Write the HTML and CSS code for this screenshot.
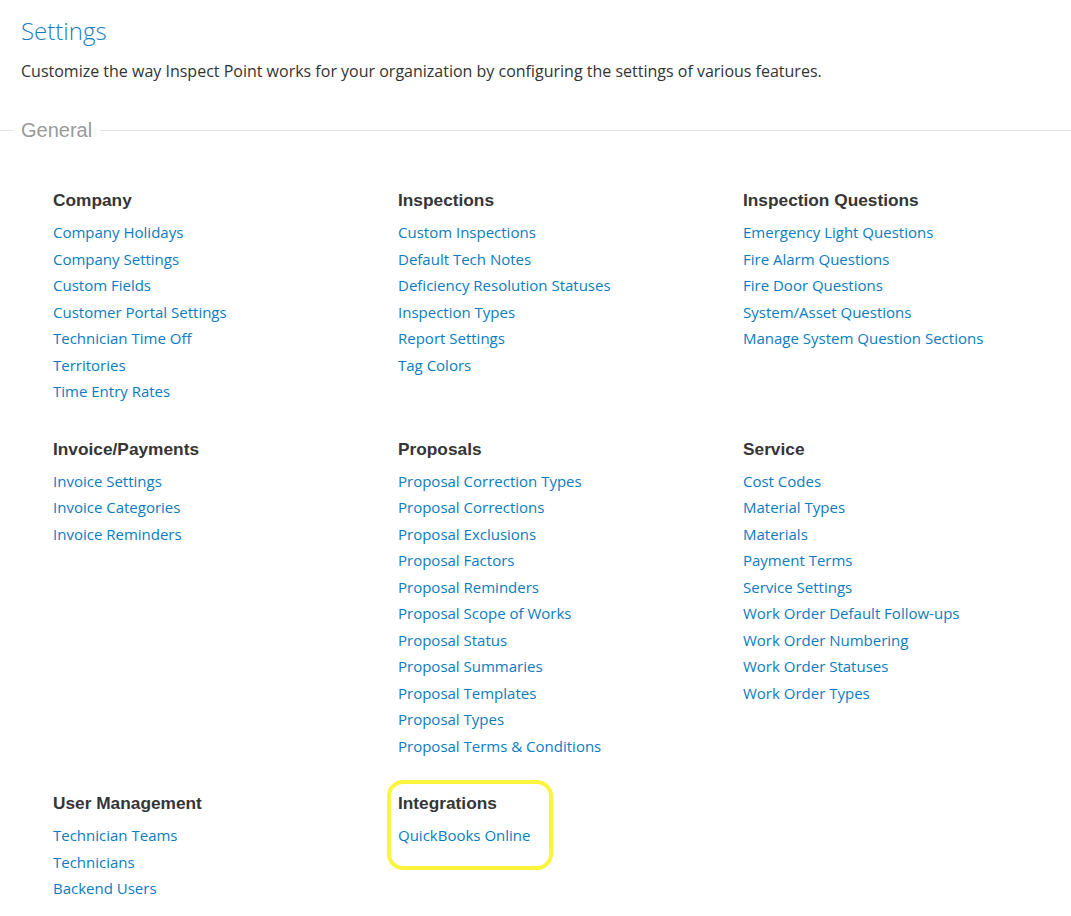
FILE: index.html
```html
<html>
<head>
    <title>Settings</title>
    <link rel="stylesheet" href="styles.css">
</head>
<body>
<div id="page">
    <h1 class="pageTitle">Settings</h1>
    <p class="pageIntro">Customize the way Inspect Point works for your organization by configuring the settings of various features.</p>

    <div class="sectionHead"><span>General</span></div>

    <div class="groups">
        <div class="group">
            <h3>Company</h3>
            <ul>
                <li><a href="#">Company Holidays</a></li>
                <li><a href="#">Company Settings</a></li>
                <li><a href="#">Custom Fields</a></li>
                <li><a href="#">Customer Portal Settings</a></li>
                <li><a href="#">Technician Time Off</a></li>
                <li><a href="#">Territories</a></li>
                <li><a href="#">Time Entry Rates</a></li>
            </ul>
        </div>
        <div class="group">
            <h3>Inspections</h3>
            <ul>
                <li><a href="#">Custom Inspections</a></li>
                <li><a href="#">Default Tech Notes</a></li>
                <li><a href="#">Deficiency Resolution Statuses</a></li>
                <li><a href="#">Inspection Types</a></li>
                <li><a href="#">Report Settings</a></li>
                <li><a href="#">Tag Colors</a></li>
            </ul>
        </div>
        <div class="group">
            <h3>Inspection Questions</h3>
            <ul>
                <li><a href="#">Emergency Light Questions</a></li>
                <li><a href="#">Fire Alarm Questions</a></li>
                <li><a href="#">Fire Door Questions</a></li>
                <li><a href="#">System/Asset Questions</a></li>
                <li><a href="#">Manage System Question Sections</a></li>
            </ul>
        </div>

        <div class="group">
            <h3>Invoice/Payments</h3>
            <ul>
                <li><a href="#">Invoice Settings</a></li>
                <li><a href="#">Invoice Categories</a></li>
                <li><a href="#">Invoice Reminders</a></li>
            </ul>
        </div>
        <div class="group">
            <h3>Proposals</h3>
            <ul>
                <li><a href="#">Proposal Correction Types</a></li>
                <li><a href="#">Proposal Corrections</a></li>
                <li><a href="#">Proposal Exclusions</a></li>
                <li><a href="#">Proposal Factors</a></li>
                <li><a href="#">Proposal Reminders</a></li>
                <li><a href="#">Proposal Scope of Works</a></li>
                <li><a href="#">Proposal Status</a></li>
                <li><a href="#">Proposal Summaries</a></li>
                <li><a href="#">Proposal Templates</a></li>
                <li><a href="#">Proposal Types</a></li>
                <li><a href="#">Proposal Terms &amp; Conditions</a></li>
            </ul>
        </div>
        <div class="group">
            <h3>Service</h3>
            <ul>
                <li><a href="#">Cost Codes</a></li>
                <li><a href="#">Material Types</a></li>
                <li><a href="#">Materials</a></li>
                <li><a href="#">Payment Terms</a></li>
                <li><a href="#">Service Settings</a></li>
                <li><a href="#">Work Order Default Follow-ups</a></li>
                <li><a href="#">Work Order Numbering</a></li>
                <li><a href="#">Work Order Statuses</a></li>
                <li><a href="#">Work Order Types</a></li>
            </ul>
        </div>

        <div class="group">
            <h3>User Management</h3>
            <ul>
                <li><a href="#">Technician Teams</a></li>
                <li><a href="#">Technicians</a></li>
                <li><a href="#">Backend Users</a></li>
            </ul>
        </div>
        <div class="group highlight">
            <h3>Integrations</h3>
            <ul>
                <li><a href="#">QuickBooks Online</a></li>
            </ul>
        </div>
    </div>
</div>
</body>
</html>
```

FILE: styles.css
```css
body
{
    margin:0;
    background:#ffffff;
    font-family:"Open Sans", "Liberation Sans", sans-serif;
    color:#333333;
}
#page
{
    width:1071px;
    overflow:hidden;
}
.pageTitle
{
    margin:16px 0 0 21px;
    font-size:24px;
    line-height:30px;
    font-weight:300;
    color:#1b7dc0;
}
.pageIntro
{
    margin:14px 0 0 21px;
    font-size:16px;
    line-height:22px;
    color:#333333;
}
.sectionHead
{
    display:flex;
    align-items:center;
    margin-top:36px;
    height:24px;
}
.sectionHead:before,
.sectionHead:after
{
    content:"";
    height:1px;
    background:#e3e3e3;
}
.sectionHead:before
{
    width:13px;
}
.sectionHead:after
{
    flex:1;
}
.sectionHead span
{
    padding:0 8px;
    font-family:"Liberation Sans", Arial, sans-serif;
    font-size:20px;
    line-height:24px;
    color:#9a9a9a;
}
.groups
{
    display:grid;
    grid-template-columns:345px 345px 345px;
    row-gap:32px;
    margin-top:46px;
    padding-left:53px;
}
.group
{
    position:relative;
}
.group h3
{
    margin:0 0 7px 0;
    font-family:"Liberation Sans", Arial, sans-serif;
    font-size:17.3px;
    line-height:24px;
    font-weight:bold;
    color:#353535;
}
.group ul
{
    margin:0;
    padding:0;
}
.group li
{
    list-style:none;
    font-size:15px;
    line-height:26.5px;
}
.group a
{
    color:#0b7cc1;
    text-decoration:none;
}
.highlight:after
{
    content:"";
    position:absolute;
    left:-11px;
    top:-11px;
    width:158px;
    height:82px;
    border:4px solid #fbf43c;
    border-radius:16px;
}
```
